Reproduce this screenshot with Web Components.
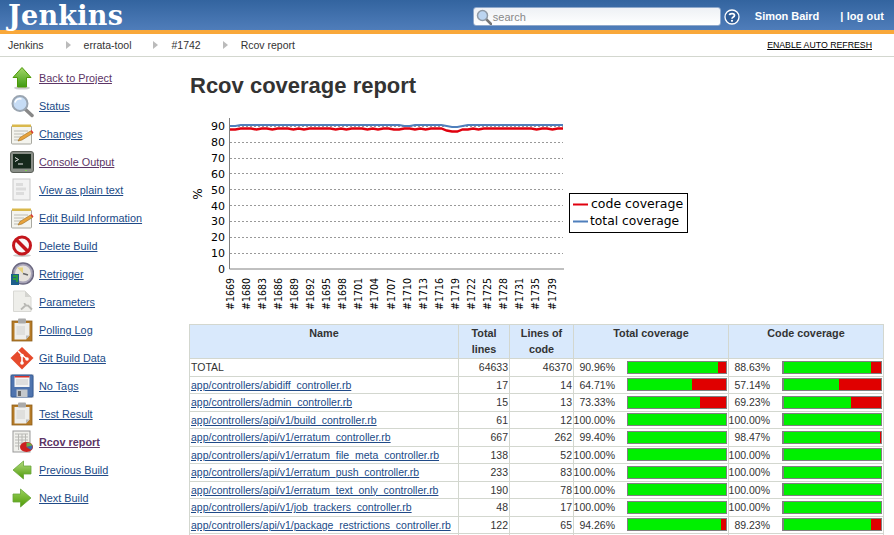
<!DOCTYPE html>
<html>
<head>
<meta charset="utf-8">
<title>Rcov coverage report</title>
<style>
    html, body { margin: 0; height: 535px; overflow: hidden; background: #fff; }
    body { font: 11px "Liberation Sans", Arial, sans-serif; color: #333; }
</style>
</head>
<body>
<jenkins-header></jenkins-header>
<bread-crumbs></bread-crumbs>
<page-body>
    <side-panel slot="side">
        <task-link icon="up" visited>Back to Project</task-link>
        <task-link icon="search">Status</task-link>
        <task-link icon="notepad">Changes</task-link>
        <task-link icon="terminal" visited>Console Output</task-link>
        <task-link icon="doc">View as plain text</task-link>
        <task-link icon="notepad">Edit Build Information</task-link>
        <task-link icon="nogo">Delete Build</task-link>
        <task-link icon="clock">Retrigger</task-link>
        <task-link icon="params">Parameters</task-link>
        <task-link icon="clipboard">Polling Log</task-link>
        <task-link icon="git">Git Build Data</task-link>
        <task-link icon="floppy">No Tags</task-link>
        <task-link icon="clipboard">Test Result</task-link>
        <task-link icon="report" visited current>Rcov report</task-link>
        <task-link icon="left">Previous Build</task-link>
        <task-link icon="right">Next Build</task-link>
    </side-panel>
    <h1-title>Rcov coverage report</h1-title>
    <trend-chart></trend-chart>
    <coverage-table></coverage-table>
</page-body>

<script>
const ICONS = {
    up: `<defs><linearGradient id="g" x1="0" y1="0" x2="0" y2="1"><stop offset="0" stop-color="#a4d86a"/><stop offset="1" stop-color="#3f9a12"/></linearGradient></defs>
        <ellipse cx="12" cy="22" rx="8" ry="1.6" fill="#ccc"/>
        <path d="M12 1.5 21 11.5H16.5V21H7.5V11.5H3Z" fill="url(#g)" stroke="#4e9a06"/>`,
    left: `<defs><linearGradient id="g" x1="0" y1="0" x2="0" y2="1"><stop offset="0" stop-color="#b4dc80"/><stop offset="1" stop-color="#4e9a06"/></linearGradient></defs>
        <path d="M13.5 3 3 12 13.5 21V16H21V8H13.5Z" fill="url(#g)" stroke="#6aa63a" stroke-width=".8"/>`,
    right: `<defs><linearGradient id="g" x1="0" y1="0" x2="0" y2="1"><stop offset="0" stop-color="#9bd25c"/><stop offset="1" stop-color="#4e9a06"/></linearGradient></defs>
        <path d="M10.5 3 21 12 10.5 21V16H3V8H10.5Z" fill="url(#g)" stroke="#6aa63a" stroke-width=".8"/>`,
    search: `<path d="M15 15 22 21.500" stroke="#888" stroke-width="3.500" stroke-linecap="round"/>
        <circle cx="10" cy="9.500" r="7.500" fill="#c6dcf5" stroke="#9aa5b1" stroke-width="2"/>
        <path d="M5 8.500C6 5.500 9 4.500 11.500 5" fill="none" stroke="#fff" stroke-width="1.500"/>`,
    notepad: `<rect x="1.500" y="4" width="20" height="18" rx="1" fill="#f4f4ee" stroke="#a8a8a0"/>
        <rect x="2" y="2.500" width="19" height="2.500" fill="#d9b84c"/>
        <path d="M4 9H18M4 12H14M4 15H11M4 18H9" stroke="#bcbcb4"/>
        <path d="M8 19 10 15.500 20.500 9 22.500 11.500 12 18Z" fill="#e8a33c" stroke="#9a6a1c" stroke-width=".6"/>
        <path d="M20.500 9 22.500 11.500 23.500 10.500 21.500 8Z" fill="#d33"/>`,
    terminal: `<rect x=".5" y="1.500" width="23" height="21" rx="2.500" fill="#8a8f88" stroke="#5c615a"/>
        <rect x="3" y="4" width="18" height="14.500" fill="#16291c"/>
        <path d="M5 7.500 8.500 9.500 5 11.500" fill="none" stroke="#e6e6e6"/>
        <path d="M8 14H13" stroke="#e6e6e6"/>
        <rect x="15" y="20" width="2" height="1" fill="#7fd04a"/>`,
    doc: `<rect x="3" y="1" width="17" height="21" fill="#f2f2f2" stroke="#c8c8c8"/>
        <path d="M6 5H13V8H6ZM6 9.500H16V12.500H6ZM6 14H14V17H6Z" fill="#dcdcdc"/>`,
    nogo: `<ellipse cx="12" cy="21.500" rx="9" ry="1.500" fill="#ccc"/>
        <circle cx="12" cy="11.500" r="8.500" fill="#f8f8f8" stroke="#c4161c" stroke-width="3"/>
        <path d="M6 5.500 18 17.500" stroke="#c4161c" stroke-width="3.500"/>`,
    clock: `<circle cx="13" cy="11.500" r="10.500" fill="#a8a4b8" stroke="#6b6880" stroke-width="1.500"/>
        <circle cx="13" cy="11.500" r="8" fill="#e6e2dc"/>
        <path d="M13 11.500 7 5.500H13Z" fill="#e8d27c"/>
        <path d="M13 11.500 18 13" stroke="#666" stroke-width="1.500"/>
        <rect x="1" y="12" width="8" height="11" fill="#1d5f8c"/>
        <path d="M3 14H7V20M3 17H6" stroke="#2e9c3c" stroke-width="1.800" fill="none"/>`,
    params: `<path d="M3.500 1H15L21 7V21.500H3.500Z" fill="#eeeeea" stroke="#d8d8d4"/>
        <path d="M15 1V7H21Z" fill="#d4d4d0"/>
        <path d="M11 19.500 16 15M14.500 13C14.500 14.500 16 16 18 15.500L22 19.500" fill="none" stroke="#b8b8b4" stroke-width="1.800"/>`,
    clipboard: `<rect x="2" y="3" width="20" height="20" fill="#b57a26" stroke="#8f5f1c" stroke-width=".8"/>
        <path d="M4.500 5H19.500V17.500L16 21.500H4.500Z" fill="#eeeeec"/>
        <path d="M16 21.500V17.500H19.500Z" fill="#bbb"/>
        <rect x="8" y=".5" width="8" height="5" rx="1" fill="#aaa"/>
        <path d="M6.500 8H15V17H6.500Z" fill="#dfdfdd"/>`,
    git: `<path d="M12 1 23.500 12 12 23.500 .5 12Z" fill="#e64a2c"/>
        <path d="M8 5 12 9V17M12 9 17 13" stroke="#fff" stroke-width="1.600" fill="none"/>
        <circle cx="12" cy="9.500" r="1.800" fill="#fff"/><circle cx="12" cy="17" r="1.800" fill="#fff"/><circle cx="17" cy="13" r="1.800" fill="#fff"/>`,
    floppy: `<rect width="24" height="24" fill="#e6e6e6"/>
        <rect x="1" y="1" width="22" height="22" rx="1" fill="#4f74ae" stroke="#345a94"/>
        <rect x="4.500" y="2" width="15" height="11" fill="#f4f4f4"/>
        <rect x="4.500" y="2" width="15" height="1.500" fill="#d8322a"/>
        <path d="M6 6H18M6 8H18M6 10H18" stroke="#c8c8c8"/>
        <rect x="6.500" y="15.500" width="11" height="7.500" fill="#c4c8cc"/>
        <rect x="8" y="17" width="3" height="5" fill="#666"/>`,
    report: `<rect x="3" y="1" width="17" height="21" fill="#f0f0ec" stroke="#999"/>
        <path d="M5 4H18M5 7H18M5 10H18M5 13H18M5 16H18M8.500 4V20M12 4V20M15.500 4V20" stroke="#b8b8b4" fill="none"/>
        <ellipse cx="16.500" cy="17" rx="6.500" ry="5" fill="#cc2020"/>
        <path d="M16.500 17V12.500A6.500 5 0 0 1 22.500 15.500Z" fill="#6ab04a"/>
        <path d="M16.500 17 22.500 15.500A6.500 5 0 0 1 21 20Z" fill="#3a6ab0"/>`
};

class TaskIcon extends HTMLElement {
    connectedCallback() {
        this.attachShadow({ mode: 'open' });
        this.shadowRoot.innerHTML = `
            <style>
                :host { display: block; width: 24px; height: 24px; flex: none; }
                svg { display: block; }
            </style>
            <svg width="24" height="24" viewBox="0 0 24 24">${ICONS[this.getAttribute('name')]}</svg>
        `;
    }
}
customElements.define('task-icon', TaskIcon);

class JenkinsHeader extends HTMLElement {
    constructor() {
        super();
        this.attachShadow({ mode: 'open' });
        this.shadowRoot.innerHTML = `
            <style>
                :host {
                    display: flex;
                    align-items: center;
                    height: 28px;
                    border-bottom: 4px solid #f9a83a;
                    padding: 2px 10px 0 8px;
                    background: linear-gradient(#33649f, #4f7dba);
                    color: #fff;
                }
                .logo {
                    font: bold 27px/28px "DejaVu Serif", serif;
                    letter-spacing: .25px;
                    flex: 1;
                }
                .search {
                    display: flex;
                    align-items: center;
                    width: 248px;
                    height: 19px;
                    box-sizing: border-box;
                    background: linear-gradient(#eef1f5, #fff);
                    border: 1px solid #8ea8cb;
                    border-radius: 3px;
                    color: #888;
                    font-size: 11px;
                    gap: 1px;
                    padding-left: 2px;
                    margin-top: 1px;
                }
                .help { margin: 1px 15px 0 3px; display: block; }
                .user { font-weight: bold; font-size: 11px; }
                .user.name { margin-right: 21px; letter-spacing: -.03px; }
                .user.out { letter-spacing: .1px; }
            </style>
            <div class="logo">Jenkins</div>
            <div class="search">
                <svg width="16" height="16" viewBox="0 0 16 16">
                    <path d="M10 10 15 15" stroke="#777" stroke-width="2.500" stroke-linecap="round"/>
                    <circle cx="6.500" cy="6.500" r="5" fill="#bcd5f1" stroke="#8f9aa6" stroke-width="1.500"/>
                </svg>
                <span>search</span>
            </div>
            <svg class="help" width="16" height="16" viewBox="0 0 16 16">
                <circle cx="8" cy="8" r="7" fill="#2f5c96" stroke="#fff" stroke-width="1.300"/>
                <path d="M5.500 6.200C5.700 4.300 10.500 4 10.500 6.500C10.500 8 8 8 8 9.800" fill="none" stroke="#fff" stroke-width="1.700"/>
                <circle cx="8" cy="11.800" r="1.100" fill="#fff"/>
            </svg>
            <span class="user name">Simon Baird</span>
            <span class="user out">| log out</span>
        `;
    }
}
customElements.define('jenkins-header', JenkinsHeader);

class BreadCrumbs extends HTMLElement {
    constructor() {
        super();
        this.attachShadow({ mode: 'open' });
        const items = ['Jenkins', 'errata-tool', '#1742', 'Rcov report'];
        const arrow = '<svg width="5" height="8" viewBox="0 0 5 8"><path d="M0 0 5 4 0 8Z" fill="#bbb"/></svg>';
        this.shadowRoot.innerHTML = `
            <style>
                :host {
                    display: flex;
                    align-items: center;
                    height: 22px;
                    border-bottom: 1px solid #d3d7cf;
                    padding: 0 22px 0 8px;
                    font-size: 10.500px;
                    color: #333;
                }
                svg { margin: 0 13px 0 22px; }
                .refresh {
                    margin-left: auto;
                    font-size: 8.750px;
                    color: #000;
                    text-decoration: underline;
                }
            </style>
            ${items.join(arrow)}
            <span class="refresh">ENABLE AUTO REFRESH</span>
        `;
    }
}
customElements.define('bread-crumbs', BreadCrumbs);

class PageBody extends HTMLElement {
    constructor() {
        super();
        this.attachShadow({ mode: 'open' });
        this.shadowRoot.innerHTML = `
            <style>
                :host { display: flex; }
                .side { flex: none; width: 189px; }
                .main { flex: 1; min-width: 0; padding-right: 10px; }
            </style>
            <div class="side"><slot name="side"></slot></div>
            <div class="main"><slot></slot></div>
        `;
    }
}
customElements.define('page-body', PageBody);

class SidePanel extends HTMLElement {
    constructor() {
        super();
        this.attachShadow({ mode: 'open' });
        this.shadowRoot.innerHTML = `
            <style>
                :host { display: block; padding: 7px 0 0 10px; }
            </style>
            <slot></slot>
        `;
    }
}
customElements.define('side-panel', SidePanel);

class TaskLink extends HTMLElement {
    connectedCallback() {
        const color = this.hasAttribute('visited') ? '#5c3566' : '#204a87';
        const weight = this.hasAttribute('current') ? 'bold' : 'normal';
        this.attachShadow({ mode: 'open' });
        this.shadowRoot.innerHTML = `
            <style>
                :host {
                    display: flex;
                    align-items: center;
                    gap: 5px;
                    height: 28px;
                    font-size: 10.850px;
                }
                a {
                    color: ${color};
                    font-weight: ${weight};
                    text-decoration: underline;
                }
            </style>
            <task-icon name="${this.getAttribute('icon')}"></task-icon>
            <a href="#"><slot></slot></a>
        `;
    }
}
customElements.define('task-link', TaskLink);

class H1Title extends HTMLElement {
    constructor() {
        super();
        this.attachShadow({ mode: 'open' });
        this.shadowRoot.innerHTML = `
            <style>
                :host {
                    display: block;
                    font: bold 22px "Liberation Sans", Arial, sans-serif;
                    color: #333;
                    padding: 16px 0 0 1px;
                    height: 39px;
                }
            </style>
            <slot></slot>
        `;
    }
}
customElements.define('h1-title', H1Title);

class TrendChart extends HTMLElement {
    constructor() {
        super();
        this.attachShadow({ mode: 'open' });

        const left = 41, top = 6, zero = 157, step = 15.85;
        const x0 = left, xEnd = 374;
        const builds = [1669, 1680, 1683, 1686, 1689, 1692, 1695, 1698, 1701, 1704, 1707, 1710, 1713, 1716, 1719, 1722, 1725, 1728, 1731, 1735, 1739];
        const n = 63, dx = (xEnd - x0) / n;

        let grid = '', yLabels = '', xLabels = '';
        for (let v = 0; v <= 90; v += 10) {
            const y = zero - v * step / 10;
            if (v > 0) grid += `<path d="M${x0} ${Math.floor(y) + .5}H${xEnd}" stroke="#999" stroke-dasharray="2 2"/>`;
            yLabels += `<text x="${x0 - 5}" y="${y + 4}" text-anchor="end">${v}</text>`;
        }
        builds.forEach((b, i) => {
            const x = x0 + i * 16.1;
            xLabels += `<text transform="translate(${x + 3.5},166) rotate(-90) scale(.86,1)" text-anchor="end">#${b}</text>`;
        });

        // code coverage dips a little on some builds, both lines dip at #1719
        const red = [], blue = [];
        const dips = { 5: 1, 8: 1, 12: 1, 14: 1, 20: 1, 22: 1, 26: 1, 28: 1, 31: 1, 32: 1, 35: 1, 37: 1, 41: 1, 45: 1, 47: 1, 58: 1, 61: 1 };
        for (let i = 0; i <= n; i++) {
            const x = x0 + i * dx;
            let r = 16.500, b = 13;
            if (dips[i]) r += 1;
            if (i < 2) { r += 1; b += 1; }
            if (i === 42 || i === 43) { r += 3; b += 2; }
            if (i === 41 || i === 44) { r += 1; b += 1; }
            if (i === 33 || i === 34) b += 1;
            red.push(`${x.toFixed(1)},${r}`);
            blue.push(`${x.toFixed(1)},${b}`);
        }

        this.shadowRoot.innerHTML = `
            <style>
                :host { display: block; height: 212px; margin-top: 0; }
                svg { display: block; font: 11px "DejaVu Sans", sans-serif; fill: #000; }
            </style>
            <svg width="510" height="212" viewBox="0 0 510 212" overflow="visible">
                ${grid}
                <path d="M${x0 - .5} ${top}V${zero}H${xEnd + 1}" fill="none" stroke="#808080"/>
                <polyline points="${blue.join(' ')}" fill="none" stroke="#4f7fbc" stroke-width="2"/>
                <polyline points="${red.join(' ')}" fill="none" stroke="#e0000e" stroke-width="2.400"/>
                ${yLabels}
                ${xLabels}
                <text transform="translate(13,82) rotate(-90)" font-size="12" text-anchor="middle">%</text>
                <rect x="380.500" y="81.500" width="118" height="39" fill="#fff" stroke="#000"/>
                <path d="M384 92.500H399" stroke="#e0000e" stroke-width="2"/>
                <path d="M384 109.500H399" stroke="#4f7fbc" stroke-width="2"/>
                <text x="402" y="96" font-size="12.500">code coverage</text>
                <text x="401" y="113" font-size="12.300">total coverage</text>
            </svg>
        `;
    }
}
customElements.define('trend-chart', TrendChart);

class CovBar extends HTMLElement {
    connectedCallback() {
        const pct = parseFloat(this.getAttribute('value'));
        const edge = this.hasAttribute('thick') ? '2px' : '0px';
        this.attachShadow({ mode: 'open' });
        this.shadowRoot.innerHTML = `
            <style>
                :host {
                    display: flex;
                    flex: none;
                    width: 100px;
                    height: 13px;
                    outline: 1px solid #808080;
                    outline-offset: -1px;
                    background: #e00000;
                }
                div {
                    background: linear-gradient(90deg, #808080 ${edge}, #00f000 ${edge});
                    width: ${pct}%;
                }
            </style>
            <div></div>
        `;
    }
}
customElements.define('cov-bar', CovBar);

class CoverageTable extends HTMLElement {
    constructor() {
        super();
        this.attachShadow({ mode: 'open' });
        const rows = [
            ['TOTAL', 64633, 46370, '90.96', '88.63'],
            ['app/controllers/abidiff_controller.rb', 17, 14, '64.71', '57.14'],
            ['app/controllers/admin_controller.rb', 15, 13, '73.33', '69.23'],
            ['app/controllers/api/v1/build_controller.rb', 61, 12, '100.00', '100.00'],
            ['app/controllers/api/v1/erratum_controller.rb', 667, 262, '99.40', '98.47'],
            ['app/controllers/api/v1/erratum_file_meta_controller.rb', 138, 52, '100.00', '100.00'],
            ['app/controllers/api/v1/erratum_push_controller.rb', 233, 83, '100.00', '100.00'],
            ['app/controllers/api/v1/erratum_text_only_controller.rb', 190, 78, '100.00', '100.00'],
            ['app/controllers/api/v1/job_trackers_controller.rb', 48, 17, '100.00', '100.00'],
            ['app/controllers/api/v1/package_restrictions_controller.rb', 122, 65, '94.26', '89.23']
        ];
        const cov = (v, extra) => `<div class="cov"><span>${v}%</span><cov-bar value="${v}" ${extra}></cov-bar></div>`;
        const body = rows.map((r, i) => `
            <tr>
                <td class="name">${i ? `<a href="#">${r[0]}</a>` : r[0]}</td>
                <td class="num">${r[1]}</td>
                <td class="num">${r[2]}</td>
                <td>${cov(r[3], '')}</td>
                <td>${cov(r[4], 'thick')}</td>
            </tr>`).join('');
        this.shadowRoot.innerHTML = `
            <style>
                :host { display: block; font-size: 10.500px; color: #333; }
                table {
                    border-collapse: collapse;
                    table-layout: fixed;
                    width: 694px;
                    border: 1px solid #d3d7cf;
                }
                th, td { border: 1px solid #d3d7cf; padding: 0; }
                th {
                    background: #d9e9fc;
                    height: 34px;
                    font-size: 10.800px;
                    line-height: 16px;
                    vertical-align: top;
                    box-sizing: border-box;
                }
                td { height: 17.5px; box-sizing: border-box; }
                td.name { padding-left: 1px; }
                td.num { text-align: right; padding-right: 1px; }
                a { color: #204a87; }
                .cov { display: flex; align-items: center; justify-content: flex-end; padding-right: 1px; gap: 12px; }
            </style>
            <table>
                <colgroup><col style="width:269px"><col style="width:51px"><col style="width:64px"><col style="width:155px"><col style="width:155px"></colgroup>
                <thead><tr><th>Name</th><th>Total lines</th><th>Lines of code</th><th>Total coverage</th><th>Code coverage</th></tr></thead>
                <tbody>${body}<tr><td></td><td></td><td></td><td></td><td></td></tr></tbody>
            </table>
        `;
    }
}
customElements.define('coverage-table', CoverageTable);
</script>
</body>
</html>
